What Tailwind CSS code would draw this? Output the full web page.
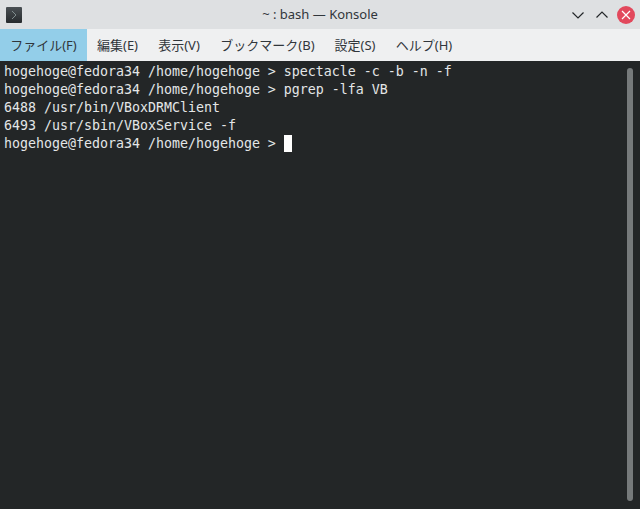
<!DOCTYPE html>
<html lang="ja">
  <head>
    <meta charset="UTF-8" />
    <title>~ : bash — Konsole</title>
    <script src="https://cdn.jsdelivr.net/npm/@tailwindcss/browser@4"></script>
  </head>
  <body class="w-[640px] h-[509px] overflow-hidden flex flex-col bg-[#232627] font-['Noto_Sans','Noto_Sans_CJK_JP',sans-serif]">
    <!-- Title bar -->
    <div class="h-[29px] shrink-0 bg-[#dee0e2] flex items-center relative">
      <div class="ml-[6px] w-[16px] h-[16px] rounded-[1px] bg-gradient-to-b from-[#4a5054] to-[#272b2e] flex items-center justify-center">
        <svg width="16" height="16" viewBox="0 0 16 16" fill="none"><path d="M6 4l4 4-4 4" stroke="#7f8c8d" stroke-width="1"/></svg>
      </div>
      <div class="absolute inset-x-0 top-0 h-[29px] flex items-center justify-center text-[13px] text-[#31363b]">~ : bash — Konsole</div>
      <div class="ml-auto flex items-center mr-[5px] relative">
        <svg class="mr-[12px]" width="12" height="8" viewBox="0 0 12 8" fill="none"><path d="M0.5 1.5L6 7l5.5-5.5" stroke="#232629" stroke-width="1.2"/></svg>
        <svg class="mr-[9px]" width="12" height="8" viewBox="0 0 12 8" fill="none"><path d="M0.5 6.5L6 1l5.5 5.5" stroke="#232629" stroke-width="1.2"/></svg>
        <div class="w-[18px] h-[18px] rounded-full bg-[#e2485c] flex items-center justify-center">
          <svg width="10" height="10" viewBox="0 0 10 10" fill="none"><path d="M1 1l8 8M9 1l-8 8" stroke="#fff" stroke-width="1.2"/></svg>
        </div>
      </div>
    </div>
    <!-- Menu bar -->
    <div class="h-[32px] shrink-0 bg-[#eff0f1] flex text-[13px] text-[#31363b]">
      <div class="w-[87px] bg-[#93cee9] flex items-center justify-center pt-[2px]">ファイル(F)</div>
      <div class="w-[61px] flex items-center justify-center pt-[2px]">編集(E)</div>
      <div class="w-[62px] flex items-center justify-center pt-[2px]">表示(V)</div>
      <div class="w-[115px] flex items-center justify-center pt-[2px]">ブックマーク(B)</div>
      <div class="w-[60px] flex items-center justify-center pt-[2px]">設定(S)</div>
      <div class="w-[78px] flex items-center justify-center pt-[2px]">ヘルプ(H)</div>
    </div>
    <!-- Terminal -->
    <div class="flex-1 relative pl-[4px] pt-[2px] font-['DejaVu_Sans_Mono',monospace] text-[13.29px] leading-[18px] text-[#e4e6e7]">
      <div class="whitespace-pre">hogehoge@fedora34 /home/hogehoge &gt; spectacle -c -b -n -f</div>
      <div class="whitespace-pre">hogehoge@fedora34 /home/hogehoge &gt; pgrep -lfa VB</div>
      <div class="whitespace-pre">6488 /usr/bin/VBoxDRMClient</div>
      <div class="whitespace-pre">6493 /usr/sbin/VBoxService -f</div>
      <div class="flex whitespace-pre">hogehoge@fedora34 /home/hogehoge &gt; <span class="w-[8px] h-[17px] bg-white"></span></div>
      <div class="absolute left-[627px] top-[7px] w-[6px] h-[433px] rounded-[3px] bg-[#767a7b]"></div>
    </div>
  </body>
</html>
